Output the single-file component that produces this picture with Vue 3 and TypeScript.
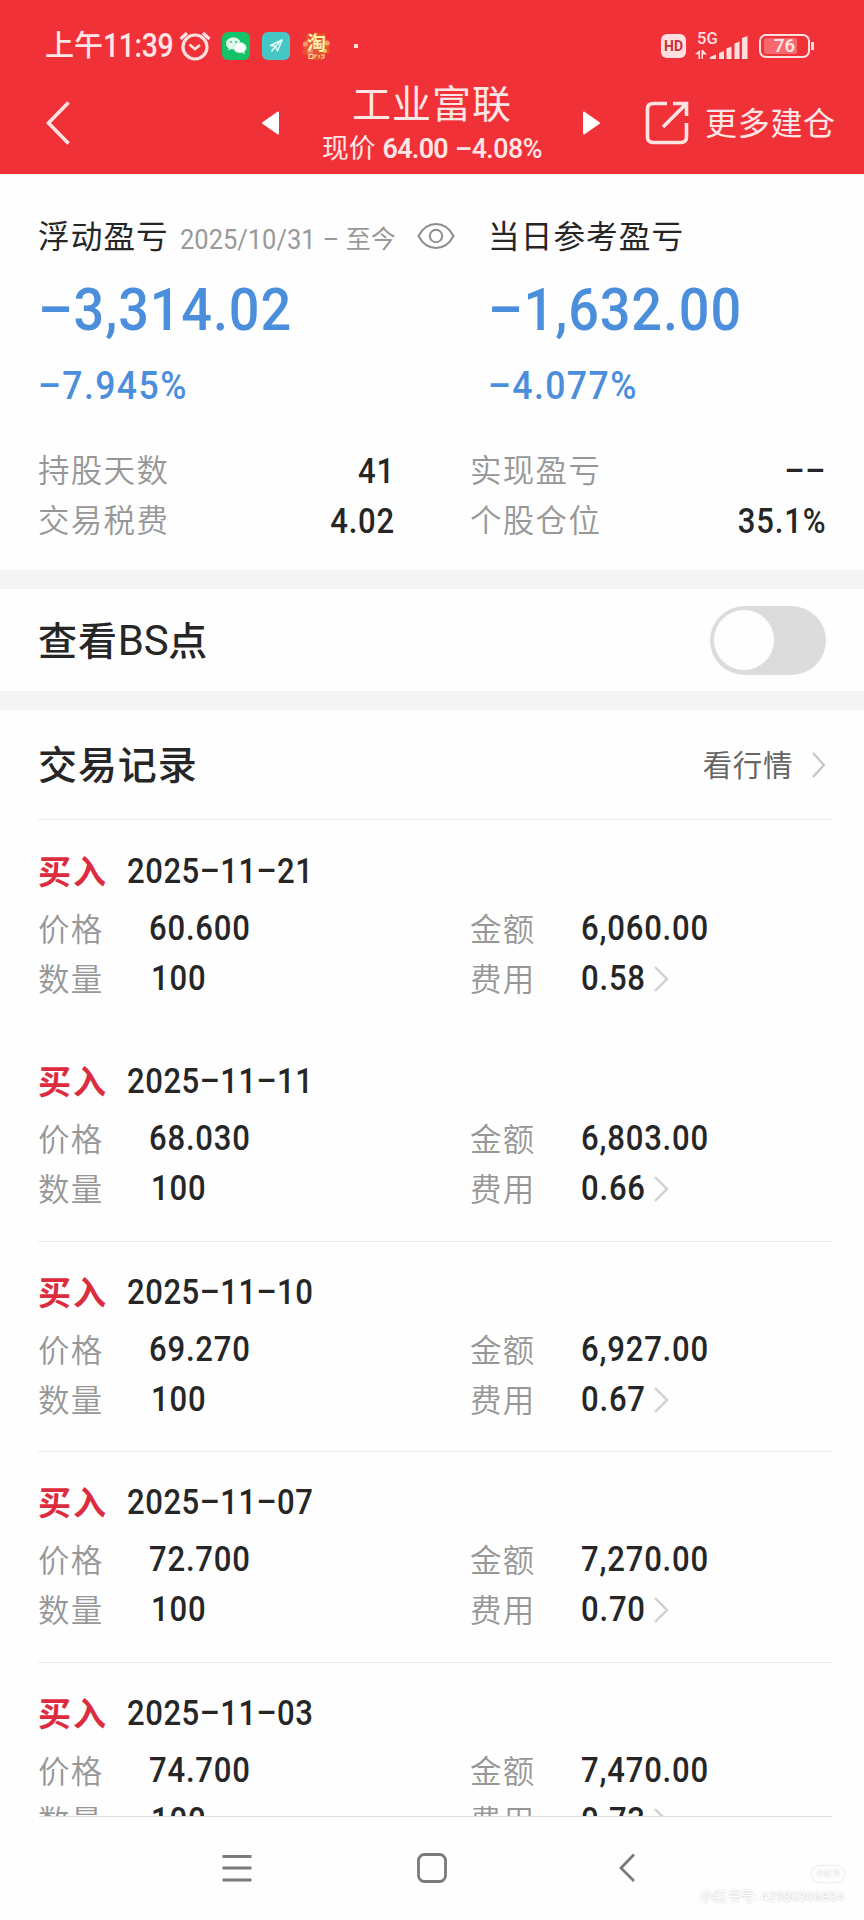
<script setup lang="ts">
import { ref } from 'vue'

interface Trade {
  date: string
  price: string
  amount: string
  quantity: string
  fee: string
  divider: boolean
}

const trades: Trade[] = [
  { date: '2025–11–21', price: '60.600', amount: '6,060.00', quantity: '100', fee: '0.58', divider: false },
  { date: '2025–11–11', price: '68.030', amount: '6,803.00', quantity: '100', fee: '0.66', divider: false },
  { date: '2025–11–10', price: '69.270', amount: '6,927.00', quantity: '100', fee: '0.67', divider: true },
  { date: '2025–11–07', price: '72.700', amount: '7,270.00', quantity: '100', fee: '0.70', divider: true },
  { date: '2025–11–03', price: '74.700', amount: '7,470.00', quantity: '100', fee: '0.73', divider: true },
]

const stats = [
  { label: '持股天数', value: '41' },
  { label: '实现盈亏', value: '––' },
  { label: '交易税费', value: '4.02' },
  { label: '个股仓位', value: '35.1%' },
]

const showPoints = ref(false)
</script>

<template>
  <div class="screen">
    <header class="top">
      <div class="status">
        <div class="status-left">
          <span class="clock">上午<span class="clock-num">11:39</span></span>
          <svg class="alarm" width="32" height="30" viewBox="0 0 32 30" fill="none" stroke="#ffdfe0" stroke-width="3.200">
            <circle cx="16" cy="16" r="12" />
            <path d="M10.500 13.500l5.500 4.500 5-4" stroke-width="2.800" />
            <path d="M1.500 8L8 2M30.500 8L24 2" />
          </svg>
          <svg class="app-icon" width="28" height="28" viewBox="0 0 28 28">
            <rect width="28" height="28" rx="6" fill="#14c268" />
            <path d="M11.500 5.500c-4.300 0-7.500 2.600-7.500 6 0 2 1 3.600 2.700 4.700L6 18.500l3-1.400c4 1 9-1 9.500-5.600 0-3.400-3-6-7-6z" fill="#dffbe9" />
            <path d="M18 10.500c-3.600 0-6.300 2.300-6.300 5.200s2.800 5.200 6.300 5.200c.8 0 1.500-.1 2.200-.3l2.400 1.300-.5-2.200c1.300-1 2.200-2.400 2.200-4 0-2.900-2.800-5.200-6.300-5.200z" fill="#fff" stroke="#8de2b3" stroke-width=".6" />
            <circle cx="9" cy="9.800" r=".9" fill="#14a058" />
            <circle cx="14" cy="9.800" r=".9" fill="#14a058" />
          </svg>
          <svg class="app-icon" width="28" height="28" viewBox="0 0 28 28">
            <rect width="28" height="28" rx="6" fill="#45c8c5" />
            <path d="M20 8L8.500 13.500l5 .8L15.500 19z" fill="none" stroke="#e9ffff" stroke-width="1.500" stroke-linejoin="round" />
            <path d="M20 8l-7 7-3.500 4.500" fill="none" stroke="#e9ffff" stroke-width="1.300" />
          </svg>
          <svg class="app-icon" width="28" height="28" viewBox="0 0 28 28">
            <path d="M5 1l4 1 5-2 5 2 4-1 1 6 4 4-1 5 1 5-5 1-3 6H8l-3-5-5-1 2-5-2-4 4-5z" fill="#e8542c" />
            <circle cx="3.500" cy="12" r="2.500" fill="#f59a70" />
            <circle cx="25" cy="11" r="2.500" fill="#f5a070" />
            <circle cx="8" cy="19" r="3.200" fill="#ef7c65" />
            <circle cx="23" cy="19" r="2" fill="#f7b56a" />
            <text x="14.500" y="18" text-anchor="middle" class="tao">淘</text>
            <path d="M7 22.500v4h4v-4zM13 26v-3h2M17 23v3M19 23h3v3h-3" fill="none" stroke="#ffd9a0" stroke-width="1.200" />
          </svg>
          <i class="dot"></i>
        </div>
        <div class="status-right">
          <span class="hd">HD</span>
          <svg class="signal" width="54" height="30" viewBox="0 0 54 30" fill="#ffdfe0">
            <text x="2" y="12.500" class="net">5G</text>
            <path d="M0 23l5-4v9H3.500v-4.500zM6.500 19H8l4 4.500H8V28H6.500z" />
            <path d="M15 28v-2l6-2.500V28zM24 28v-6l5-2v8zM31.500 28V17.500l5-2V28zM39.500 28V12.500l5-2V28zM47 28V7l5.500-2v23z" />
          </svg>
          <div class="battery"><span class="cell"><i class="charge"></i><b>76</b></span><i class="nub"></i></div>
        </div>
      </div>

      <div class="bar">
        <svg class="back" width="26" height="44" viewBox="0 0 26 44" fill="none" stroke="#ffe3e3" stroke-width="3.600">
          <path d="M23.500 1.500L3.500 22l20 20.500" />
        </svg>
        <svg class="prev" width="20" height="26" viewBox="0 0 20 26" fill="#fff"><path d="M2 13L17 2.500v21z" stroke="#fff" stroke-width="2" stroke-linejoin="round" /></svg>
        <div class="heading">
          <h1>工业富联</h1>
          <p>现价 <b>64.00</b><span>–4.08%</span></p>
        </div>
        <svg class="next" width="20" height="26" viewBox="0 0 20 26" fill="#fff"><path d="M18 13L3 2.500v21z" stroke="#fff" stroke-width="2" stroke-linejoin="round" /></svg>
        <svg class="export" width="44" height="44" viewBox="0 0 44 44" fill="none" stroke="#ffe3e3" stroke-width="3.600">
          <path d="M22 2.500H8Q2.500 2.500 2.500 8v28q0 5.500 5.500 5.500h28q5.500 0 5.500-5.500V22" />
          <path d="M18 26L41 3M28 2.500h13.500V15" />
        </svg>
        <span class="more">更多建仓</span>
      </div>
    </header>

    <section class="summary">
      <div class="titles">
        <div class="title-left">
          <span class="title">浮动盈亏</span>
          <span class="range"><span class="range-num">2025/10/31</span><span class="range-dash">–</span>至今</span>
          <svg class="eye" width="38" height="28" viewBox="0 0 38 28" fill="none" stroke="#8d8d8d" stroke-width="2">
            <path d="M1.500 14C6 5.500 12 2 19 2s13 3.500 17.500 12C32 22.500 26 26 19 26S6 22.500 1.500 14z" />
            <circle cx="19" cy="14" r="6.200" />
          </svg>
        </div>
        <span class="title">当日参考盈亏</span>
      </div>
      <div class="big"><span class="narrow">–3,314.02</span><span class="narrow">–1,632.00</span></div>
      <div class="percent"><span class="narrow">–7.945%</span><span class="narrow">–4.077%</span></div>
      <div class="stats">
        <div v-for="stat in stats" :key="stat.label" class="stat">
          <span class="label">{{ stat.label }}</span>
          <span class="num narrow">{{ stat.value }}</span>
        </div>
      </div>
    </section>

    <section class="points">
      <span class="subject">查看<span class="latin">BS</span>点</span>
      <button class="toggle" :class="{ on: showPoints }" aria-label="查看BS点" @click="showPoints = !showPoints"><i></i></button>
    </section>

    <section class="records">
      <div class="records-head">
        <h2 class="subject">交易记录</h2>
        <a class="quote"><span>看行情</span>
          <svg width="16" height="28" viewBox="0 0 16 28" fill="none" stroke="#c6c6c6" stroke-width="2.200"><path d="M2 2l11 12L2 26" /></svg>
        </a>
      </div>
      <article v-for="trade in trades" :key="trade.date" class="trade" :class="{ ruled: trade.divider }">
        <div class="trade-head"><strong>买入</strong><span class="date narrow">{{ trade.date }}</span></div>
        <div class="trade-row">
          <span class="label">价格</span><span class="num narrow">{{ trade.price }}</span>
          <span class="label">金额</span><span class="num narrow">{{ trade.amount }}</span>
        </div>
        <div class="trade-row">
          <span class="label">数量</span><span class="num narrow quantity">{{ trade.quantity }}</span>
          <span class="label">费用</span>
          <span class="fee">
            <span class="num narrow">{{ trade.fee }}</span>
            <svg width="16" height="28" viewBox="0 0 16 28" fill="none" stroke="#cfcfcf" stroke-width="2.400"><path d="M1 2l12 12L1 26" /></svg>
          </span>
        </div>
      </article>
    </section>

    <nav class="nav">
      <svg width="30" height="30" viewBox="0 0 30 30" fill="none" stroke="#7b7b7b" stroke-width="3"><path d="M.5 3.500h29M.5 15h29M.5 27h29" /></svg>
      <svg width="30" height="30" viewBox="0 0 30 30" fill="none" stroke="#7b7b7b" stroke-width="2.800"><rect x="1.500" y="1.500" width="27" height="27" rx="6" /></svg>
      <svg class="nav-back" width="18" height="30" viewBox="0 0 18 30" fill="none" stroke="#7b7b7b" stroke-width="2.800"><path d="M16 1.500L3 15l13 13" /></svg>
      <div class="watermark"><span class="pill">小红书</span><span class="account">小红书号: 42980306834</span></div>
    </nav>
  </div>
</template>

<style>
body {
  margin: 0;
  background: #fefefe;
}
</style>

<style scoped>
.screen {
  display: flex;
  flex-direction: column;
  width: 864px;
  height: 1920px;
  overflow: hidden;
  background: #fefefe;
  color: #262626;
  font-family: Roboto, "Noto Sans CJK SC", sans-serif;
  white-space: nowrap;
}

svg {
  display: block;
  flex: none;
}

/* Condensed figures */
.narrow {
  display: block;
  transform: scaleX(0.9);
  transform-origin: left center;
}

.top {
  flex: none;
  box-sizing: border-box;
  height: 174px;
  background: #f13138;
  color: #ffe6e6;
}

.status {
  display: flex;
  justify-content: space-between;
  box-sizing: border-box;
  height: 74px;
  padding: 28px 50px 10px 45px;
}

.status-left,
.status-right {
  display: flex;
  align-items: center;
  height: 36px;
}

.clock {
  display: flex;
  width: 134px;
  font-size: 29px;
  font-weight: 500;
  line-height: 38px;
}

.clock-num {
  width: 76px;
  font-size: 33px;
  letter-spacing: -0.400px;
  transform: scaleX(0.86);
  transform-origin: left center;
}

.app-icon {
  margin-left: 12px;
}

.alarm + .app-icon {
  margin-left: 11px;
}

.tao {
  font: 700 19px "Noto Sans CJK SC", sans-serif;
  fill: #fff0b0;
}

.dot {
  width: 4px;
  height: 4px;
  margin-left: 24px;
  background: #ffdfe0;
}

.hd {
  width: 25px;
  height: 24px;
  margin-right: 9px;
  border-radius: 6px;
  background: #ffdfe0;
  color: #c8303a;
  font: 700 14px/24px Roboto, sans-serif;
  text-align: center;
}

.signal {
  overflow: visible;
}

.net {
  font: 500 16.500px Roboto, sans-serif;
}

.battery {
  display: flex;
  align-items: center;
  margin-left: 10px;
}

.cell {
  position: relative;
  box-sizing: border-box;
  width: 51px;
  height: 24px;
  border: 2.500px solid #ffdfe0;
  border-radius: 7px;
}

.charge {
  position: absolute;
  inset: 2px 11px 2px 3px;
  border-radius: 2px;
  background: #f8686c;
}

.cell b {
  position: absolute;
  inset: 0;
  font-size: 18.500px;
  font-weight: 600;
  line-height: 20px;
  text-align: center;
}

.nub {
  width: 3px;
  height: 8px;
  margin-left: 1px;
  background: #ffdfe0;
}

.bar {
  display: flex;
  align-items: center;
  height: 97px;
  padding-left: 45px;
}

.prev {
  margin-left: 190px;
}

.heading {
  display: flex;
  flex-direction: column;
  align-items: center;
  width: 222px;
  margin: 5px 0 0 40px;
}

.heading h1 {
  margin: 0;
  font-size: 39px;
  font-weight: 400;
  letter-spacing: 1px;
  line-height: 48px;
}

.heading p {
  display: flex;
  gap: 7px;
  margin: 0;
  font-size: 26.800px;
  line-height: 40px;
}

.heading b {
  font-weight: 600;
  letter-spacing: -0.700px;
}

.heading p span {
  font-weight: 500;
  letter-spacing: -0.500px;
}

.next {
  margin-left: 38px;
}

.export {
  margin-left: 44px;
}

.more {
  margin: 2px 0 0 16px;
  font-size: 32px;
  letter-spacing: 0.700px;
  line-height: 44px;
}

.summary {
  flex: none;
  box-sizing: border-box;
  height: 396px;
  padding: 41px 38px 0 38px;
}

.titles,
.big,
.percent {
  display: grid;
  grid-template-columns: 450px 1fr;
}

.titles {
  height: 44px;
  line-height: 45px;
}

.title-left {
  display: flex;
  align-items: center;
  height: 44px;
}

.title {
  font-size: 31.600px;
  letter-spacing: 1.100px;
}

.range {
  display: flex;
  width: 216px;
  margin: 5px 22px 0 11px;
  color: #999;
  font-size: 25px;
}

.range-num {
  width: 135px;
  font-size: 28px;
  transform: scaleX(0.91);
  transform-origin: left center;
}

.range-dash {
  width: 14px;
  margin: 0 9px 0 8px;
}

.eye {
  margin: 0 0 3px -1px;
}

.big {
  box-sizing: border-box;
  height: 102px;
  color: #4b8edb;
  font-size: 60px;
  font-weight: 500;
  letter-spacing: 1px;
  line-height: 102px;
}

.percent {
  height: 50px;
  color: #4b8edb;
  font-size: 39.500px;
  font-weight: 500;
  letter-spacing: 1.600px;
  line-height: 49px;
}

.stats {
  display: grid;
  grid-template-columns: 357px 356px;
  column-gap: 75px;
  margin-top: 36px;
}

.stat {
  display: flex;
  justify-content: space-between;
  height: 49.500px;
  line-height: 50px;
}

.stat .narrow {
  line-height: 48px;
  transform-origin: right center;
}

.label {
  color: #979797;
  font-size: 31.500px;
  font-weight: 350;
  letter-spacing: 1.300px;
}

.num,
.date {
  color: #262626;
  font-size: 34.500px;
  font-weight: 500;
  letter-spacing: 0.900px;
}

.date {
  letter-spacing: 0.600px;
}

.points {
  display: flex;
  flex: none;
  align-items: center;
  justify-content: space-between;
  box-sizing: border-box;
  height: 140px;
  padding: 0 38px;
  border-top: 19px solid #f4f4f4;
  border-bottom: 19px solid #f4f4f4;
}

.subject {
  margin: 0 0 5px;
  font-size: 39px;
  font-weight: 500;
  letter-spacing: 0.900px;
}

.latin {
  font-size: 42px;
  font-weight: 450;
  letter-spacing: -0.300px;
}

.toggle {
  width: 116px;
  height: 69px;
  padding: 4px;
  border: 0;
  border-radius: 35px;
  background: #dcdcdc;
}

.toggle i {
  display: block;
  width: 60px;
  height: 60px;
  border-radius: 50%;
  background: #fefefe;
}

.toggle.on i {
  margin-left: auto;
}

.records {
  flex: none;
  height: 1106px;
  padding: 0 32px 0 38px;
  overflow: hidden;
}

.records-head {
  display: flex;
  align-items: center;
  justify-content: space-between;
  height: 109px;
  padding-right: 5px;
  border-bottom: 1px solid #ececec;
}

.quote {
  display: flex;
  align-items: center;
  gap: 18px;
  color: #666;
  font-size: 29.500px;
  letter-spacing: 0.600px;
}

.quote span {
  margin-bottom: 4px;
}

.trade {
  box-sizing: border-box;
  height: 210.400px;
  padding-top: 25px;
}

.trade.ruled {
  padding-top: 24px;
  border-top: 1px solid #ececec;
}

.trade-head {
  display: flex;
  height: 58px;
  line-height: 52px;
}

.trade-head strong {
  width: 89px;
  color: #dc2c40;
  font-size: 33px;
  font-weight: 700;
  letter-spacing: 2px;
  line-height: 55px;
}

.trade-row {
  display: grid;
  grid-template-columns: 111px 321px 111px 1fr;
  height: 50px;
  line-height: 50px;
}

.trade-row .label {
  line-height: 55px;
}

.quantity {
  margin-left: 1.500px;
}

.fee {
  display: flex;
  align-items: center;
  gap: 1px;
  height: 50px;
}

.fee svg {
  margin-top: 2px;
}

.nav {
  position: relative;
  flex: none;
  display: flex;
  box-sizing: border-box;
  height: 104px;
  padding: 37px 0 0 222px;
  gap: 165px;
}

.nav::before {
  position: absolute;
  top: 0;
  right: 32px;
  left: 39px;
  height: 1px;
  background: #e2e2e2;
  content: "";
}

.nav-back {
  margin-left: 6px;
}

.watermark {
  position: absolute;
  right: 20px;
  bottom: 14px;
  display: flex;
  flex-direction: column;
  align-items: flex-end;
  gap: 4px;
  color: #fff;
  text-shadow: 0 0 2px #b8b8b8;
}

.pill {
  padding: 0 4px;
  border-radius: 8px;
  box-shadow: 0 0 3px #d8d8d8;
  font-size: 8px;
  line-height: 16px;
}

.account {
  font-size: 13.500px;
  line-height: 20px;
}
</style>
